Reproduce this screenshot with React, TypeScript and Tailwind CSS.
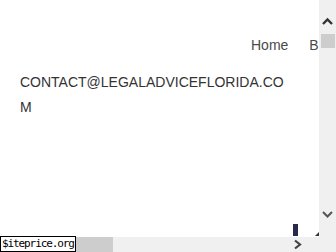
export default function App() {
  return (
    <div className="relative w-[336px] h-[252px] overflow-hidden bg-white font-['Liberation_Sans',Arial,sans-serif]">
      <nav className="flex gap-[21px] pl-[251px] pt-[35px] whitespace-nowrap text-[14px] leading-[20px] text-[#4a4a4a]">
        <a>Home</a>
        <a>Blog</a>
      </nav>
      <p className="mt-[15px] ml-[20px] w-[270px] break-all text-[14px] leading-[25px] text-[#333]">
        CONTACT@LEGALADVICEFLORIDA.COM
      </p>

      {/* vertical scrollbar */}
      <div className="absolute right-0 top-0 flex h-[252px] w-[17px] flex-col items-center bg-[#f0f0f0] pt-[17px] pb-[33px]">
        <svg width="13" height="9" viewBox="0 0 13 9">
          <polyline points="2,7 6.5,2.5 11,7" fill="none" stroke="#333" strokeWidth="2.4" />
        </svg>
        <div className="mt-[8px] h-[14px] w-[14px] bg-[#cdcdcd]" />
        <div className="flex-1" />
        <svg width="13" height="9" viewBox="0 0 13 9">
          <polyline points="2,2 6.5,6.5 11,2" fill="none" stroke="#555" strokeWidth="2" />
        </svg>
      </div>

      {/* horizontal scrollbar */}
      <div className="absolute left-0 bottom-0 flex h-[15px] w-[319px] items-center bg-[#f0f0f0]">
        <div className="h-full w-[113px] bg-[#cdcdcd]" />
        <svg width="10" height="11" viewBox="0 0 10 11" className="ml-[180px]">
          <polyline points="2,1.5 7,5.5 2,9.5" fill="none" stroke="#444" strokeWidth="2.2" />
        </svg>
      </div>

      <div className="absolute left-[293px] top-[224px] w-[5px] h-[12px] bg-[#2a2a48]" />
      <div className="absolute left-[315px] top-[232px] w-0 h-0 border-l-[4px] border-l-transparent border-b-[4px] border-b-[#333]" />

      <div className="absolute left-0 bottom-0 h-[16px] border border-black bg-white px-[1px] font-['DejaVu_Sans_Mono',monospace] text-[11px] leading-[14px] tracking-[-1.1px] text-black">
        $iteprice.org
      </div>
    </div>
  )
}
